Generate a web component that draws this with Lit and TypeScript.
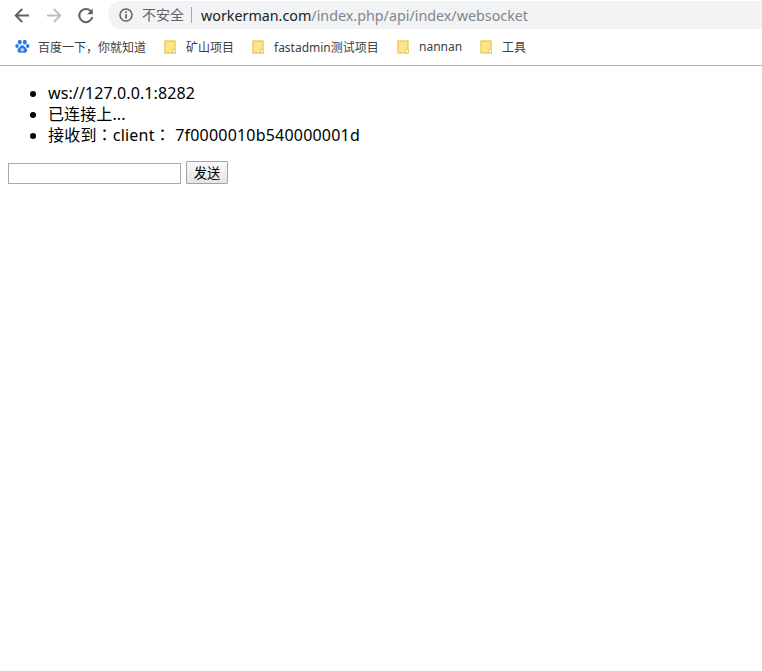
import { LitElement, html, css } from "lit";
import { customElement } from "lit/decorators.js";

@customElement("app-root")
export class AppRoot extends LitElement {
  static styles = css`
    :host { display: block; min-height: 671px; background: #fff; font-family: "Noto Sans", "Noto Sans CJK SC", sans-serif; color: #000; }
    .toolbar { height: 29px; display: flex; align-items: flex-start; }
    .nav { width: 108px; height: 29px; display: flex; padding: 4px 0 0 13px; box-sizing: border-box; flex: none; }
    .nav svg { display: block; flex: none; }
    .fwd { margin-left: 14px; }
    .reload { margin-left: 14px; }
    .omni { flex: 1; height: 28px; margin-top: 1px; background: #f1f3f4; border-radius: 14px 0 0 14px; display: flex; align-items: center; padding-left: 11px; white-space: nowrap; }
    .info { flex: none; }
    .sec { color: #5f6368; font-size: 14px; margin-left: 9px; padding-right: 7px; border-right: 1px solid #a5a8ab; line-height: 16px; }
    .host { margin-left: 9px; color: #202124; font-size: 14.3px; }
    .path { color: #80868b; font-size: 14.3px; }
    .bar { height: 37px; display: flex; align-items: center; padding: 0 0 1px 15px; box-sizing: border-box; border-bottom: 1px solid #b3b3b3; }
    .bm { display: flex; align-items: center; flex: none; }
    .bt { font-size: 12px; color: #3c4043; white-space: nowrap; margin-left: 8px; }
    .w0 { width: 149px; }
    .w1 { width: 88px; }
    .w2 { width: 145px; }
    .w3 { width: 83px; }
    .w4 { width: 60px; }
    ul { margin: 17px 0 15px; padding: 0 0 0 48px; font-size: 16px; line-height: 21px; list-style: none; }
    li { position: relative; height: 21px; white-space: nowrap; letter-spacing: 0.1px; }
    li.wide { letter-spacing: 0.2px; font-family: "Noto Sans", "Noto Sans CJK TC", sans-serif; }
    li::before { content: ""; position: absolute; left: -18px; top: 7.5px; width: 6px; height: 6px; border-radius: 50%; background: #000; }
    .form { display: flex; align-items: flex-end; padding-left: 8px; height: 24px; margin-top: -1px; }
    .in { width: 173px; height: 21px; box-sizing: border-box; border: 1px solid #a9a9a9; padding: 0; background: #fff; display: block; }
    .btn { margin-left: 5px; width: 42px; height: 23px; box-sizing: border-box; border: 1px solid #a5a5a5; border-radius: 1px; background: linear-gradient(#f9f9f9, #e4e4e4); font: 13.3px "Noto Sans", "Noto Sans CJK SC", sans-serif; padding: 0 0 1px; color: #000; }
  `;
  render() {
    const folder = (n: string, cls: string) => html`
      <span class="bm ${cls}">
        <svg width="14" height="16" viewBox="0 0 14 16">
          <rect x="1" y="2" width="10" height="12" fill="#fee58f" stroke="#eecb52" stroke-width="1.4"/>
          <rect x="9" y="10.5" width="2.500" height="3.500" fill="#fff" stroke="#eecb52"/>
        </svg>
        <span class="bt">${n}</span>
      </span>`;
    return html`
      <div class="toolbar">
        <div class="nav">
          <svg width="18" height="22" viewBox="0 0 18 22"><path d="M16 11.500H3.500M9.200 5 2.800 11.500l6.400 6.500" fill="none" stroke="#5f6368" stroke-width="2"/></svg>
          <svg class="fwd" width="18" height="22" viewBox="0 0 18 22"><path d="M2 11.500h12.500M8.800 5l6.400 6.500-6.400 6.500" fill="none" stroke="#bdc1c6" stroke-width="2"/></svg>
          <svg class="reload" width="18" height="22" viewBox="0 0 18 22"><path d="M14.200 7.600A6.600 6.600 0 1 0 15.300 13" fill="none" stroke="#5f6368" stroke-width="2"/><path d="M15.800 4.500v5.800H10z" fill="#5f6368"/></svg>
        </div>
        <div class="omni">
          <svg class="info" width="14" height="14" viewBox="0 0 14 14"><circle cx="7" cy="7" r="6" fill="none" stroke="#5f6368" stroke-width="1.500"/><rect x="6.200" y="6.200" width="1.700" height="4.400" fill="#5f6368"/><rect x="6.200" y="3.400" width="1.700" height="1.700" fill="#5f6368"/></svg>
          <span class="sec">不安全</span><span class="host">workerman.com</span><span class="path">/index.php/api/index/websocket</span>
        </div>
      </div>
      <div class="bar">
        <span class="bm w0">
          <svg width="15" height="15" viewBox="0 0 15 15" fill="#2b78e4"><ellipse cx="4.800" cy="3.200" rx="1.900" ry="2.400"/><ellipse cx="9.800" cy="3.200" rx="1.900" ry="2.400"/><ellipse cx="2" cy="7" rx="1.700" ry="2.100"/><ellipse cx="12.700" cy="7" rx="1.700" ry="2.100"/><path d="M7.300 6.300c-2.100 0-2.700 2.100-4 3.200-1.600 1.400-.9 4.300 1.800 4.300 1 0 1.500-.3 2.200-.3s1.200.3 2.200.3c2.700 0 3.400-2.900 1.800-4.300-1.300-1.100-1.900-3.200-4-3.200z"/><circle cx="7.300" cy="10.800" r="1.800" fill="#bcd6f7"/></svg>
          <span class="bt">百度一下，你就知道</span>
        </span>
        ${folder("矿山项目", "w1")}
        ${folder("fastadmin测试项目", "w2")}
        ${folder("nannan", "w3")}
        ${folder("工具", "w4")}
      </div>
      <ul>
        <li>ws://127.0.0.1:8282</li>
        <li>已连接上...</li>
        <li class="wide">接收到：client： 7f0000010b540000001d</li>
      </ul>
      <div class="form"><input class="in" /><button class="btn">发送</button></div>
    `;
  }
}
